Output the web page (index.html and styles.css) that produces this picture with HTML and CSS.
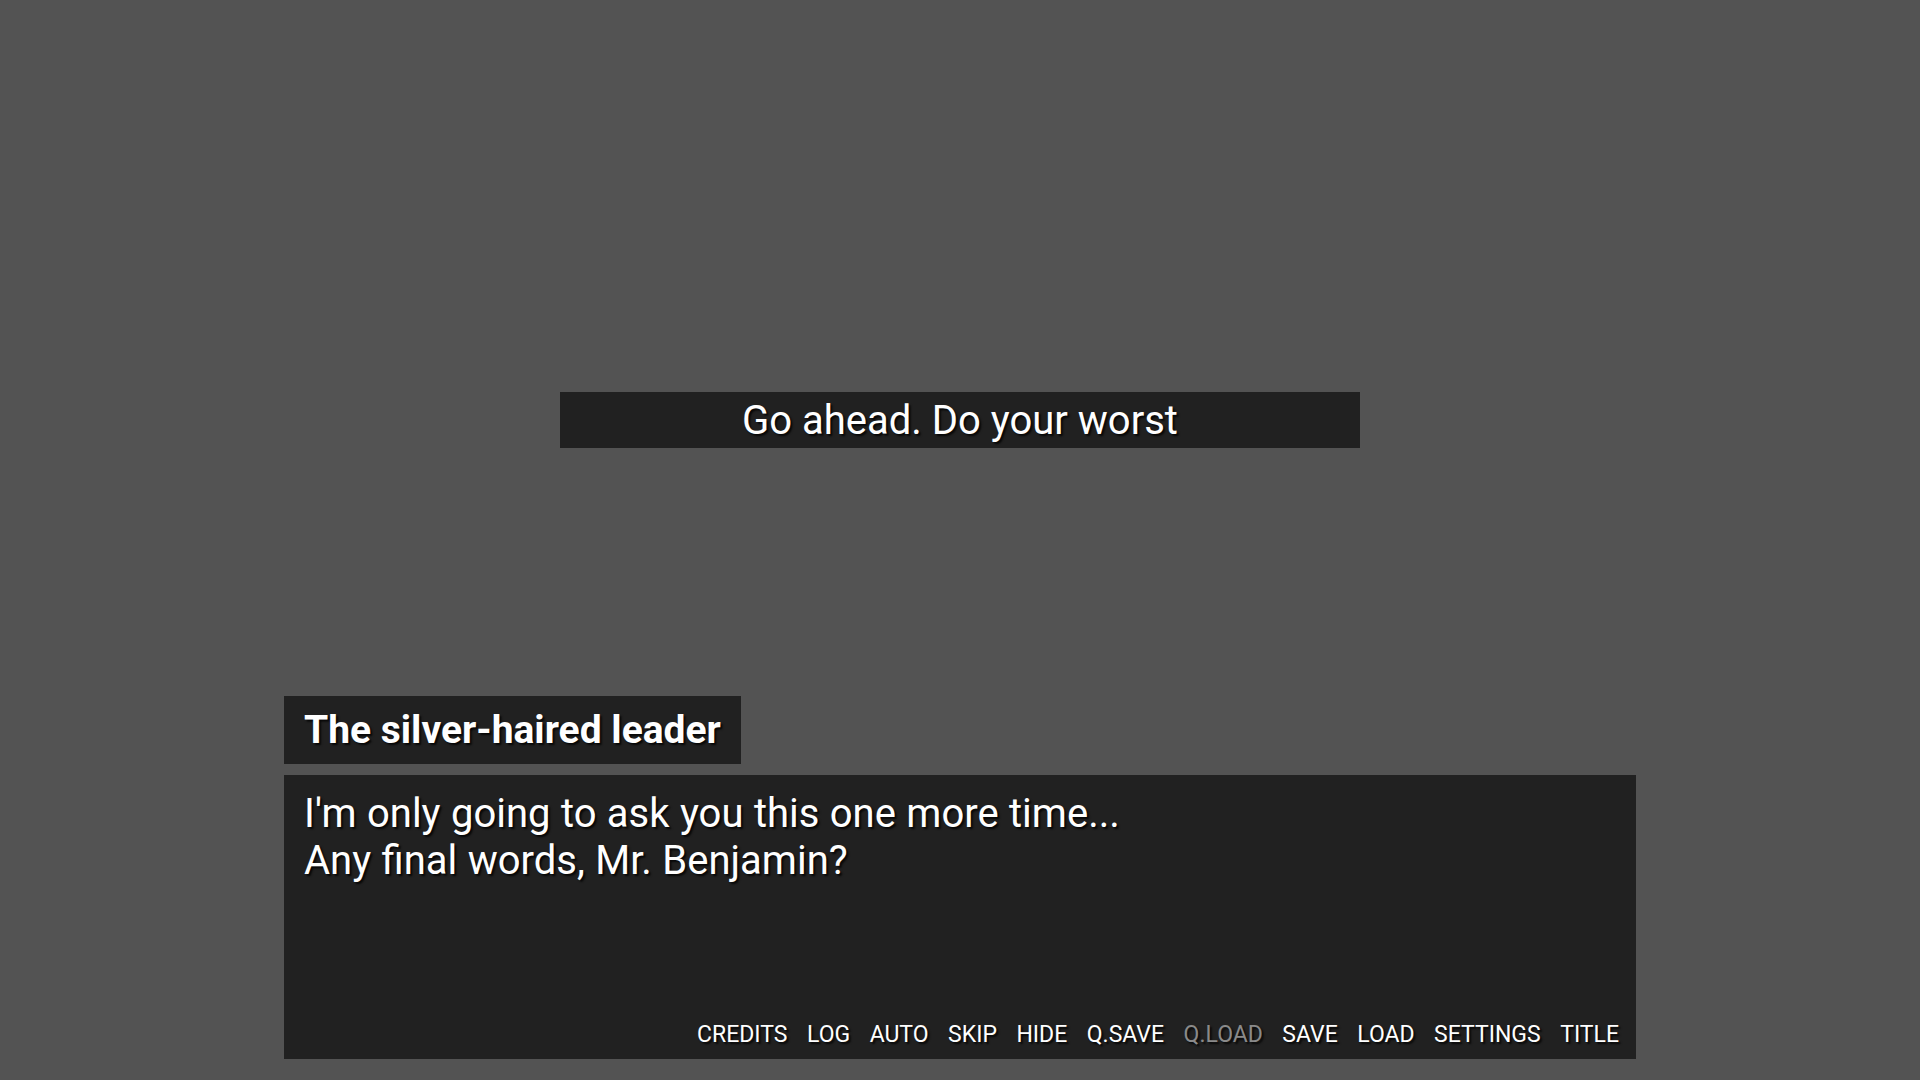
FILE: index.html
```html
<!DOCTYPE html>
<html>
<head>
<meta charset="utf-8">
<link rel="stylesheet" href="styles.css">
</head>
<body>
<div class="screen">
  <div class="narration-row">
    <div class="narration">Go ahead. Do your worst</div>
  </div>
  <div class="say">
    <div class="namebox">The silver-haired leader</div>
    <div class="textbox">
      <div class="dialogue">I'm only going to ask you this one more time...<br>Any final words, Mr. Benjamin?</div>
      <div class="quickmenu">
        <span class="qbtn">CREDITS</span>
        <span class="qbtn">LOG</span>
        <span class="qbtn">AUTO</span>
        <span class="qbtn">SKIP</span>
        <span class="qbtn">HIDE</span>
        <span class="qbtn">Q.SAVE</span>
        <span class="qbtn disabled">Q.LOAD</span>
        <span class="qbtn">SAVE</span>
        <span class="qbtn">LOAD</span>
        <span class="qbtn">SETTINGS</span>
        <span class="qbtn">TITLE</span>
      </div>
    </div>
  </div>
</div>
</body>
</html>
```

FILE: styles.css
```css
html, body {
  margin: 0;
  padding: 0;
  background: #535353;
}
.screen {
  width: 1920px;
  height: 1080px;
  display: flex;
  flex-direction: column;
  font-family: Roboto, "Liberation Sans", sans-serif;
  color: #ffffff;
  text-shadow: 2px 2px 2px rgba(0,0,0,0.8);
}
.narration-row {
  padding-top: 392px;
  display: flex;
  justify-content: center;
}
.narration {
  width: 800px;
  height: 56px;
  background: #212121;
  display: flex;
  align-items: center;
  justify-content: center;
  font-size: 40px;
}
.say {
  margin-top: auto;
  margin-bottom: 21px;
  align-self: center;
  width: 1352px;
  display: flex;
  flex-direction: column;
  gap: 11px;
}
.namebox {
  align-self: flex-start;
  background: #212121;
  height: 68px;
  padding: 0 20px;
  display: flex;
  align-items: center;
  font-size: 39px;
  font-weight: bold;
}
.textbox {
  background: #212121;
  height: 284px;
  box-sizing: border-box;
  padding: 15px 17px 11px 20px;
  display: flex;
  flex-direction: column;
}
.dialogue {
  font-size: 40px;
  line-height: 47px;
  word-spacing: 0.5px;
}
.quickmenu {
  margin-top: auto;
  display: flex;
  justify-content: flex-end;
  gap: 19.5px;
  font-size: 23px;
}
.qbtn.disabled {
  color: #8a8a8a;
}
```
